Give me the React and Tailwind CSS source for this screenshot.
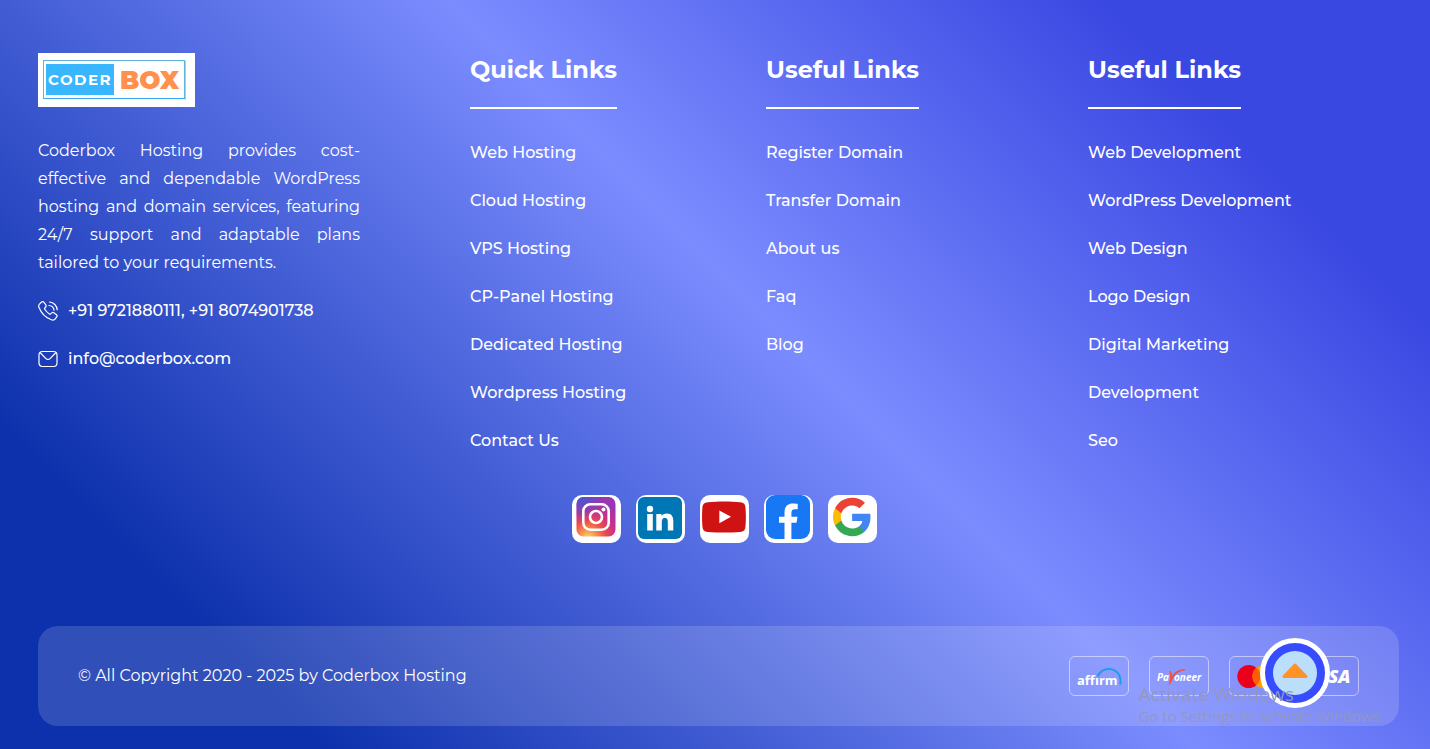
import React from "react";

const quickLinks = [
  "Web Hosting",
  "Cloud Hosting",
  "VPS Hosting",
  "CP-Panel Hosting",
  "Dedicated Hosting",
  "Wordpress Hosting",
  "Contact Us",
];

const domainLinks = [
  "Register Domain",
  "Transfer Domain",
  "About us",
  "Faq",
  "Blog",
];

const serviceLinks = [
  "Web Development",
  "WordPress Development",
  "Web Design",
  "Logo Design",
  "Digital Marketing",
  "Development",
  "Seo",
];

const Logo = () => (
  <svg width="157" height="54" viewBox="0 0 157 54" className="block">
    <rect width="157" height="54" fill="#fff" />
    <rect x="5.5" y="7.5" width="141" height="38" fill="none" stroke="#5fb4dc" />
    <path d="M5 45.5h142" stroke="#38a8f0" />
    <path d="M147.5 8v39" stroke="#a9cfdc" />
    <rect x="8" y="11" width="68" height="31" fill="#38b6ff" />
    <text
      x="10"
      y="32"
      fill="#fff"
      className="font-[Montserrat,sans-serif] text-[15px] font-bold tracking-widest"
    >
      CODER
    </text>
    <text
      x="82"
      y="36"
      fill="#ff914d"
      className="font-[Montserrat,sans-serif] text-[25px] font-black"
    >
      BOX
    </text>
  </svg>
);

const PhoneIcon = () => (
  <svg
    width="20"
    height="20"
    viewBox="0 0 20 20"
    fill="none"
    stroke="currentColor"
    strokeWidth="1.2"
    strokeLinecap="round"
    strokeLinejoin="round"
    className="shrink-0"
  >
    <path d="M2.3 2.2 3.7 1c.7-.6 1.6-.4 2.1.2l2 2.7c.5.7.4 1.5-.1 2.1l-.9 1c-.3.4-.3.9 0 1.3 1.2 1.9 2.7 3.5 4.6 4.7.4.3.9.2 1.3-.1l1.1-1c.6-.5 1.4-.5 2-.1l2.7 1.9c.7.5.8 1.4.3 2l-1.3 1.900c-1 1.400-2.700 1.800-4.200 1.200C7.500 16.500 3 11.500.9 6.200.4 4.700.9 3.200 2.300 2.200Z" />
    <path d="M11.5 1c4.200.4 7.400 3.600 7.700 7.700M11 4.500c2.700.2 4.700 2 5 4.700" />
  </svg>
);

const MailIcon = () => (
  <svg
    width="20"
    height="20"
    viewBox="0 0 20 20"
    fill="none"
    stroke="currentColor"
    strokeWidth="1.2"
    strokeLinecap="round"
    strokeLinejoin="round"
    className="shrink-0"
  >
    <rect x="1" y="2.5" width="18" height="15" rx="3.5" />
    <path d="m2.500 4 5.200 5.300c1.400 1.400 3.200 1.400 4.600 0L17.500 4" />
  </svg>
);

const Instagram = () => (
  <svg width="49" height="48" viewBox="0 0 49 48">
    <defs>
      <radialGradient id="igWarm" cx="0.3" cy="1.05" r="1">
        <stop offset="0" stopColor="#f9d98a" />
        <stop offset="0.2" stopColor="#f79a4b" />
        <stop offset="0.45" stopColor="#ee4a4a" />
        <stop offset="0.7" stopColor="#c9308c" />
        <stop offset="1" stopColor="#9a35b5" />
      </radialGradient>
      <radialGradient id="igCool" cx="0.1" cy="0" r="0.65">
        <stop offset="0" stopColor="#3f5bd0" />
        <stop offset="1" stopColor="#6a45c0" stopOpacity="0" />
      </radialGradient>
    </defs>
    <rect x="4.5" y="2" width="39" height="39.5" rx="7" fill="url(#igWarm)" />
    <rect x="4.5" y="2" width="39" height="39.5" rx="7" fill="url(#igCool)" />
    <g fill="none" stroke="#fff" strokeWidth="2.6">
      <rect x="11.3" y="9.3" width="25.4" height="25.4" rx="7" />
      <circle cx="24" cy="22" r="6" />
    </g>
    <circle cx="31.5" cy="14.5" r="2" fill="#fff" />
  </svg>
);

const Linkedin = () => (
  <svg width="49" height="48" viewBox="0 0 49 48">
    <rect x="2" y="2" width="44" height="42" rx="6" fill="#0077b5" />
    <circle cx="14" cy="14" r="3.2" fill="#fff" />
    <path
      fill="#fff"
      d="M11.200 19h5.600v16.500h-5.600zM20.300 19h5.300v2.300c.9-1.600 2.700-2.700 5.200-2.700 5.200 0 6.500 3.400 6.500 8v8.900h-5.500v-8c0-2.300-.3-4.400-2.900-4.400s-3.100 2-3.100 4.300v8.100h-5.500z"
    />
  </svg>
);

const Youtube = () => (
  <svg width="49" height="48" viewBox="0 0 49 48">
    <path
      fill="#ce1312"
      d="M8 7.200c10-.9 23-.9 32 0 4 .4 5.200 2 5.500 5.600.5 6 .5 12.500 0 18.400-.3 3.800-1.700 5.400-5.500 5.800-10 .8-22 .8-32 0-4-.3-5.200-2-5.600-5.800-.5-6-.5-12.400 0-18.400.3-3.600 1.700-5.200 5.600-5.600Z"
    />
    <path fill="#fff" d="M19.300 15.500v12.700L31 21.800z" />
  </svg>
);

const Facebook = () => (
  <svg width="49" height="48" viewBox="0 0 49 48">
    <rect x="2" y="0" width="44" height="44" rx="9" fill="#1877f2" />
    <path
      fill="#fff"
      d="M20.500 44V27.800H15v-6h5.500v-4.500c0-5.700 3.300-8.700 8.300-8.700 2.300 0 4.900.4 4.900.4v5.300h-2.800c-2.700 0-3.500 1.700-3.500 3.400v4.100h6.100l-1 6h-5.100V44z"
    />
  </svg>
);

const Google = () => (
  <svg width="49" height="48" viewBox="0 0 49 48">
    <g transform="translate(4.5 2.8) scale(0.8)">
      <path
        fill="#4285f4"
        d="M47.500 24.600c0-1.600-.1-3.200-.4-4.700H24.500v9h12.900c-.6 3-2.200 5.500-4.800 7.200v6h7.700c4.600-4.200 7.200-10.400 7.200-17.500z"
      />
      <path
        fill="#34a853"
        d="M24.500 48c6.500 0 11.900-2.100 15.800-5.900l-7.700-6c-2.100 1.500-4.900 2.300-8.100 2.300-6.300 0-11.500-4.200-13.400-9.900H3.200v6.200C7.100 42.600 15.200 48 24.500 48z"
      />
      <path
        fill="#fbbc04"
        d="M11.100 28.500c-1-3-1-6.100 0-9.100v-6.200H3.200c-3.400 6.800-3.400 14.700 0 21.500z"
      />
      <path
        fill="#ea4335"
        d="M24.500 9.500c3.400-.1 6.700 1.200 9.200 3.600l6.900-6.900C36.200 2.100 30.500-.1 24.500 0 15.200 0 7.100 5.100 3.200 13.200l7.900 6.200c1.900-5.700 7.100-9.900 13.400-9.900z"
      />
    </g>
  </svg>
);

const socials = [
  { name: "Instagram", icon: <Instagram /> },
  { name: "LinkedIn", icon: <Linkedin /> },
  { name: "YouTube", icon: <Youtube /> },
  { name: "Facebook", icon: <Facebook /> },
  { name: "Google", icon: <Google /> },
];

const Affirm = () => (
  <svg width="58" height="38" viewBox="0 0 58 38">
    <path
      d="M27.500 19.500C30 14.500 34 12 38.500 12c7.500 0 12.500 5.500 12 13.500l-.3 2"
      fill="none"
      stroke="#1a9fe8"
      strokeWidth="2"
    />
    <text
      x="7"
      y="28"
      fill="#fff"
      className="font-['Open_Sans',sans-serif] text-[13px] font-bold"
    >
      affırm
    </text>
  </svg>
);

const Payoneer = () => (
  <svg width="58" height="38" viewBox="0 0 58 38">
    <g fill="#fff" className="font-['Open_Sans',sans-serif] text-[10px] font-bold italic">
      <text x="7" y="24">
        Pa
      </text>
      <text x="24" y="24">
        oneer
      </text>
    </g>
    <path
      d="M19.800 14c1.600 1.500 2 3.700 1.900 6 2.500-4.500 7-7.500 13.300-7.200-6.500.9-10.200 4-12.400 8.500-1.100 2.400-2 4.500-3.400 6.200 1.500-4.500 1.900-9 .6-13.500z"
      fill="#ff4a2b"
      stroke="#ff4a2b"
      strokeWidth="0.8"
    />
  </svg>
);

const Mastercard = () => (
  <svg width="58" height="38" viewBox="0 0 58 38">
    <circle cx="18.8" cy="19.5" r="11.5" fill="#eb001b" />
    <circle cx="34" cy="19.5" r="11.5" fill="#ffa000" />
    <path d="M26.500 10.800a11.500 11.500 0 0 1 0 17.400 11.500 11.500 0 0 1 0-17.400z" fill="#ff5f00" />
  </svg>
);

const Visa = () => (
  <svg width="48" height="38" viewBox="0 0 48 38">
    <text
      x="1"
      y="26"
      fill="#fff"
      className="font-['Open_Sans',sans-serif] text-[18px] font-extrabold italic"
    >
      VISA
    </text>
  </svg>
);

const payments = [<Affirm />, <Payoneer />, <Mastercard />, <Visa />];

const LinkColumn = ({ title, links }) => (
  <div>
    <h2 className="w-fit border-b-2 border-white pb-5 text-2xl leading-[34px] font-bold">
      {title}
    </h2>
    <ul className="mt-[30px] flex flex-col gap-5 font-medium">
      {links.map((link) => (
        <li key={link}>
          <a href="#">{link}</a>
        </li>
      ))}
    </ul>
  </div>
);

const App = () => {
  const scrollToTop = () => window.scrollTo({ top: 0, behavior: "smooth" });

  return (
    <footer className="relative min-h-screen bg-[linear-gradient(45deg,#0d31ac_15%,#7b8cff_55%,#3a48e2_85%)] pt-[53px] pr-[31px] pb-[23px] pl-[38px] font-[Montserrat,Inter,sans-serif] text-base leading-7 text-white">
      <div className="grid grid-cols-[432fr_296fr_322fr_311fr]">
        <div className="mr-[110px]">
          <a href="#" aria-label="Coderbox" className="inline-block align-top">
            <Logo />
          </a>
          <p className="mt-[30px] text-justify">
            Coderbox Hosting provides cost-effective and dependable WordPress
            hosting and domain services, featuring 24/7 support and adaptable
            plans tailored to your requirements.
          </p>
          <ul className="mt-5 flex flex-col gap-5 font-medium">
            <li>
              <a href="tel:+919721880111" className="flex items-center gap-[10px]">
                <PhoneIcon />
                +91 9721880111, +91 8074901738
              </a>
            </li>
            <li>
              <a href="mailto:info@coderbox.com" className="flex items-center gap-[10px]">
                <MailIcon />
                info@coderbox.com
              </a>
            </li>
          </ul>
        </div>
        <LinkColumn title="Quick Links" links={quickLinks} />
        <LinkColumn title="Useful Links" links={domainLinks} />
        <LinkColumn title="Useful Links" links={serviceLinks} />
      </div>

      <div className="mt-10 flex justify-center gap-[15px] pl-3">
        {socials.map(({ name, icon }) => (
          <a
            key={name}
            href="#"
            aria-label={name}
            className="block overflow-hidden rounded-[10px] bg-white"
          >
            {icon}
          </a>
        ))}
      </div>

      <div className="mt-[83px] flex items-center justify-between rounded-[20px] bg-white/15 px-10 py-[30px]">
        <p>© All Copyright 2020 - 2025 by Coderbox Hosting</p>
        <div className="flex gap-5">
          {payments.map((card, i) => (
            <div key={i} className="rounded-md border border-white/50">
              {card}
            </div>
          ))}
        </div>
      </div>

      <button
        type="button"
        aria-label="Back to top"
        onClick={scrollToTop}
        className="fixed right-[100px] bottom-[41px] flex size-[70px] items-center justify-center rounded-full border-5 border-white bg-[#384cff]"
      >
        <span className="flex size-11 items-center justify-center rounded-full bg-[#bbdefb]">
          <svg width="28" height="18" viewBox="0 0 28 18" className="mb-1">
            <path
              d="M14 3 25 14.500H3z"
              fill="#ff9228"
              stroke="#ff9228"
              strokeWidth="3"
              strokeLinejoin="round"
            />
          </svg>
        </span>
      </button>

      <div className="pointer-events-none fixed right-[46px] bottom-[23px] font-['Open_Sans',sans-serif] text-[#9397bd]">
        <p className="text-[19px] leading-6">Activate Windows</p>
        <p className="text-[15px] leading-5">Go to Settings to activate Windows.</p>
      </div>
    </footer>
  );
};

export default App;
